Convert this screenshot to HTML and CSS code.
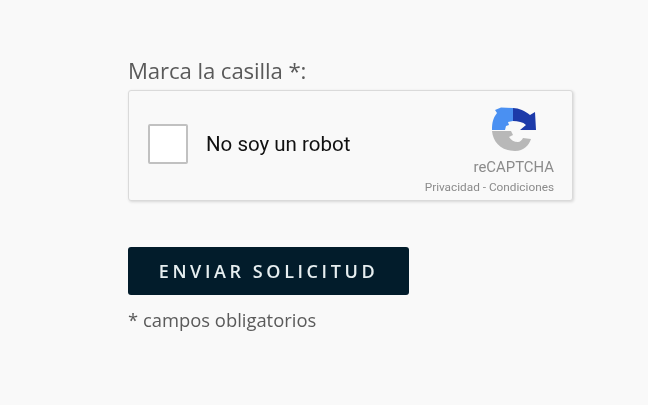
FILE: index.html
```html
<!DOCTYPE html>
<html lang="es">
<head>
<meta charset="utf-8">
<title>Solicitud</title>
<link rel="stylesheet" href="styles.css">
</head>
<body>
<form class="form">
  <label class="label">Marca la casilla *:</label>
  <div class="captcha">
    <span class="check"></span>
    <span class="robot">No soy un robot</span>
    <div class="brand">
      <svg class="logo" viewBox="0 0 46 46" width="46" height="46" aria-hidden="true">
        <path fill="#4a90f2" d="M1 23 C1 16 2 11 6 6 L4 3 L10 0.500 L22 1 L22 14 L17 15 L18 18 L15 19 L14 23 Z"/>
        <path fill="#1c3aa9" d="M22 1 C28 1 34 4 39 8 L44 5 L45 23 L29 23 L35 18 C32 15 27 14 22 14 Z"/>
        <path fill="#b8b8b8" d="M1 24 L14 24 L20 24 L22 28 L18 30 C20 33 23 35 27 35 C29 35 31 33 32 31 L40 32 C38 38 33 44 24 44 C10 44 2 35 1 24 Z"/>
      </svg>
      <span class="name">reCAPTCHA</span>
      <span class="terms">Privacidad - Condiciones</span>
    </div>
  </div>
  <button class="submit" type="button">ENVIAR SOLICITUD</button>
  <p class="note">* campos obligatorios</p>
</form>
</body>
</html>
```
FILE: styles.css
```css
html, body {
  margin: 0;
  height: 100%;
  background: #f9f9f9;
  overflow: hidden;
}
body {
  padding: 57px 0 0 128px;
  box-sizing: border-box;
  font-family: "Open Sans", sans-serif;
}
.form {
  display: flex;
  flex-direction: column;
  align-items: flex-start;
  filter: blur(0.4px);
}
.label {
  font-size: 22.200px;
  line-height: 28px;
  color: #5a5a5a;
  margin-bottom: 5px;
  letter-spacing: -0.1px;
}
.captcha {
  box-sizing: border-box;
  width: 445px;
  height: 111px;
  display: flex;
  align-items: center;
  padding: 0 18px 3px 19px;
  background: #f9f9f9;
  border: 1px solid #dadada;
  border-radius: 3px;
  box-shadow: 1px 1px 3px rgba(0, 0, 0, .14);
  font-family: Roboto, sans-serif;
}
.check {
  box-sizing: border-box;
  width: 40px;
  height: 40px;
  background: #fff;
  border: 2px solid #c1c1c1;
  border-radius: 2px;
}
.robot {
  margin-left: 18px;
  font-size: 20.500px;
  color: #111;
}
.brand {
  margin-left: auto;
  align-self: flex-start;
  padding-top: 16px;
  display: flex;
  flex-direction: column;
  align-items: flex-end;
}
.logo {
  margin: 0 17px 5px 0;
}
.name {
  font-size: 14.900px;
  line-height: 18px;
  color: #8b8b8b;
}
.terms {
  margin-top: 4px;
  font-size: 11.800px;
  line-height: 15px;
  color: #8b8b8b;
}
.submit {
  margin-top: 46px;
  width: 281px;
  height: 48px;
  background: #021c2b;
  border: 0;
  border-radius: 3px;
  color: #e6eef0;
  font-family: "Open Sans", sans-serif;
  font-size: 18px;
  font-weight: 600;
  letter-spacing: 3.6px;
}
.note {
  margin: 12px 0 0;
  font-size: 18.400px;
  line-height: 26px;
  color: #5a5a5a;
}
```
